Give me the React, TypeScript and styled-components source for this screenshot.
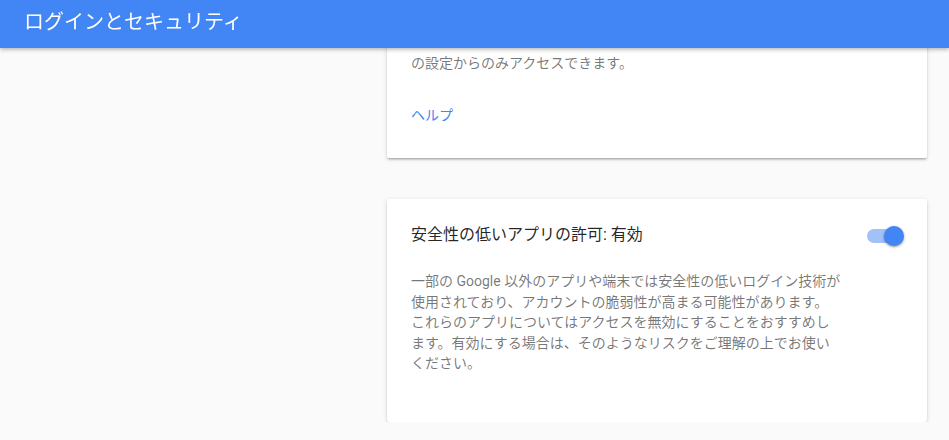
import React from "react";
import styled, { createGlobalStyle } from "styled-components";

const GlobalStyle = createGlobalStyle`
  html, body {
    margin: 0;
    padding: 0;
    background: #fafafa;
    font-family: Roboto, "Noto Sans CJK JP", "Noto Sans", sans-serif;
    -webkit-font-smoothing: antialiased;
  }
  * { box-sizing: border-box; }
`;

const Header = styled.header`
  position: fixed;
  top: 0;
  left: 0;
  right: 0;
  height: 48px;
  z-index: 10;
  display: flex;
  align-items: center;
  padding: 0 24px 4px;
  background: #4285f4;
  box-shadow: 0 2px 4px rgba(0, 0, 0, 0.22), 0 0 4px rgba(0, 0, 0, 0.1);
`;

const HeaderTitle = styled.h1`
  margin: 0;
  font-size: 20px;
  font-weight: 400;
  line-height: 24px;
  color: #ffffff;
`;

const Page = styled.div`
  display: flex;
  padding-top: 29px;
`;

const Sidebar = styled.aside`
  flex: 0 0 387px;
`;

const Column = styled.main`
  width: 540px;
  display: flex;
  flex-direction: column;
  gap: 41px;
`;

const Card = styled.section<{ $bottom: number }>`
  background: #ffffff;
  border-radius: 2px;
  padding: 24px 24px ${(p) => p.$bottom}px;
  box-shadow: 0 2px 2px rgba(0, 0, 0, 0.14), 0 1px 5px rgba(0, 0, 0, 0.12),
    0 3px 1px -2px rgba(0, 0, 0, 0.1);
`;

const Description = styled.p`
  margin: 0;
  max-width: 440px;
  font-size: 14px;
  line-height: 20.5px;
  color: rgba(0, 0, 0, 0.54);
  white-space: nowrap;
`;

const Shortline = styled.p`
  margin: 0;
  font-size: 14px;
  line-height: 20px;
  color: rgba(0, 0, 0, 0.54);
`;

const HelpLink = styled.a`
  display: block;
  margin-top: 32px;
  font-size: 14px;
  line-height: 20px;
  color: #4285f4;
  text-decoration: none;
  cursor: pointer;
`;

const TitleRow = styled.div`
  display: flex;
  align-items: center;
  justify-content: space-between;
  margin-bottom: 24px;
`;

const CardTitle = styled.h2`
  margin: 0;
  font-size: 16px;
  font-weight: 400;
  line-height: 24px;
  color: rgba(0, 0, 0, 0.87);
`;

const Switch = styled.div`
  position: relative;
  width: 37px;
  height: 20px;
  margin-top: 2px;
  margin-right: -1px;
  cursor: pointer;
`;

const Track = styled.span`
  position: absolute;
  left: 0;
  top: 3px;
  width: 34px;
  height: 14px;
  border-radius: 7px;
  background: #a0c2f9;
`;

const Thumb = styled.span`
  position: absolute;
  right: 0;
  top: 0;
  width: 20px;
  height: 20px;
  border-radius: 50%;
  background: #4285f4;
  box-shadow: 0 1px 3px rgba(0, 0, 0, 0.35), 0 1px 1px rgba(0, 0, 0, 0.12);
`;

const descriptionLines = [
  "一部の Google 以外のアプリや端末では安全性の低いログイン技術が",
  "使用されており、アカウントの脆弱性が高まる可能性があります。",
  "これらのアプリについてはアクセスを無効にすることをおすすめし",
  "ます。有効にする場合は、そのようなリスクをご理解の上でお使い",
  "ください。",
];

export default function App() {
  return (
    <div lang="ja">
      <GlobalStyle />
      <Header>
        <HeaderTitle>ログインとセキュリティ</HeaderTitle>
      </Header>
      <Page>
        <Sidebar />
        <Column>
          <Card $bottom={33}>
            <Shortline>の設定からのみアクセスできます。</Shortline>
            <HelpLink>ヘルプ</HelpLink>
          </Card>
          <Card $bottom={48}>
            <TitleRow>
              <CardTitle>安全性の低いアプリの許可: 有効</CardTitle>
              <Switch role="switch" aria-checked="true">
                <Track />
                <Thumb />
              </Switch>
            </TitleRow>
            <Description>
              {descriptionLines.map((line, i) => (
                <React.Fragment key={i}>
                  {line}
                  {i < descriptionLines.length - 1 && <br />}
                </React.Fragment>
              ))}
            </Description>
          </Card>
        </Column>
      </Page>
    </div>
  );
}
